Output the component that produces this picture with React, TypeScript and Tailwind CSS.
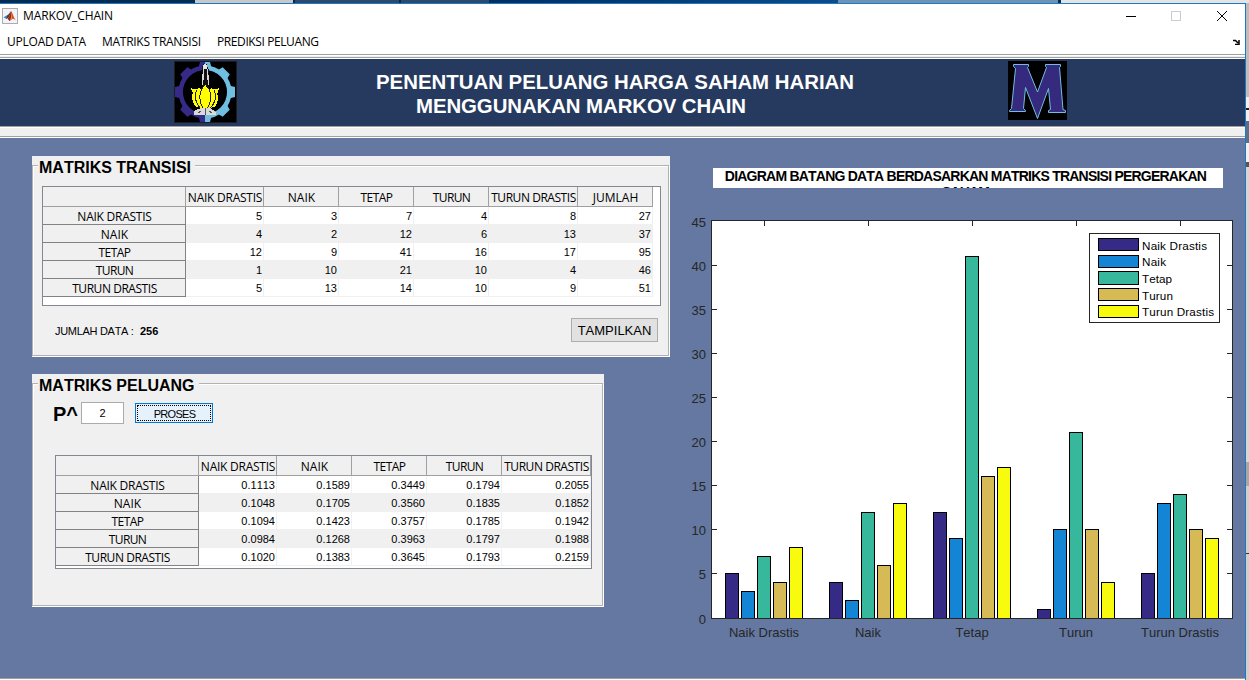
import React from "react";

const SEGOE = "font-['Open_Sans','Noto_Sans',sans-serif]";

const COLORS = ["#352a86", "#1484d4", "#37b89d", "#d6ba55", "#f9fb0e"];

type Label = { text: string; tracking: string };

const ND: Label = { text: "NAIK DRASTIS", tracking: "tracking-[-0.25px]" };
const N: Label = { text: "NAIK", tracking: "tracking-[0px]" };
const TE: Label = { text: "TETAP", tracking: "tracking-[-0.5px]" };
const TU: Label = { text: "TURUN", tracking: "tracking-[-0.6px]" };
const TD: Label = { text: "TURUN DRASTIS", tracking: "tracking-[-0.45px]" };
const JU: Label = { text: "JUMLAH", tracking: "tracking-[0px]" };

const ROWS = [ND, N, TE, TU, TD];

const TRANSITIONS = [
  [5, 3, 7, 4, 8],
  [4, 2, 12, 6, 13],
  [12, 9, 41, 16, 17],
  [1, 10, 21, 10, 4],
  [5, 13, 14, 10, 9],
];

const PROBABILITIES = [
  ["0.1113", "0.1589", "0.3449", "0.1794", "0.2055"],
  ["0.1048", "0.1705", "0.3560", "0.1835", "0.1852"],
  ["0.1094", "0.1423", "0.3757", "0.1785", "0.1942"],
  ["0.0984", "0.1268", "0.3963", "0.1797", "0.1988"],
  ["0.1020", "0.1383", "0.3645", "0.1793", "0.2159"],
];

const TOTALS = [27, 37, 95, 46, 51];

function MatrixTable({
  columns,
  rows,
  grid,
  size,
}: {
  columns: Label[];
  rows: (string | number)[][];
  grid: string;
  size: string;
}) {
  return (
    <div className={`box-border overflow-hidden border border-[#828790] bg-white ${size}`}>
      <div className={`grid h-5 w-max ${grid}`}>
        <div className="border-r border-b border-[#a0a0a0] bg-[#f0f0f0]" />
        {columns.map((c) => (
          <div
            key={c.text}
            className={`flex items-center justify-center overflow-hidden border-r border-b border-[#a0a0a0] bg-[#f0f0f0] pt-[2px] pl-px text-[12px] leading-[17px] whitespace-nowrap ${SEGOE} ${c.tracking}`}
          >
            {c.text}
          </div>
        ))}
      </div>
      {rows.map((row, i) => (
        <div key={i} className={`grid h-[18px] w-max ${grid}`}>
          <div
            className={`flex items-center justify-center border-r border-b border-[#828282] bg-[#f0f0f0] pt-[2px] pl-px text-[12px] leading-[15px] whitespace-nowrap ${SEGOE} ${ROWS[i].tracking}`}
          >
            {ROWS[i].text}
          </div>
          {row.map((value, j) => (
            <div
              key={j}
              className={`border-r border-b border-[#f0f0f0] pt-px pr-px text-right text-[11px] leading-4 ${
                i % 2 ? "bg-[#f0f0f0]" : "bg-white"
              }`}
            >
              {value}
            </div>
          ))}
        </div>
      ))}
    </div>
  );
}

function Panel({ title, size, children }: { title: string; size: string; children: React.ReactNode }) {
  return (
    <section className={`flex flex-col bg-[#f0f0f0] pt-[9px] pr-px pb-px ${size}`}>
      <div className="flex-1 border border-[#b2b2b2] shadow-[1px_1px_0_#fff,inset_1px_1px_0_#fff]">
        <h2 className="-mt-[9px] ml-[5px] w-max bg-[#f0f0f0] pr-[4px] pl-px text-[16px] leading-[22px] font-bold">
          {title}
        </h2>
        {children}
      </div>
    </section>
  );
}

const AXIS = { left: 711.5, top: 220.5 };
const yOf = (v: number) => Math.floor(618 - 8.824 * v) + 0.5;

function BarChart() {
  const ticks = [5, 10, 15, 20, 25, 30, 35, 40];
  const names = ["Naik Drastis", "Naik", "Tetap", "Turun", "Turun Drastis"];
  const legendTop = [238.5, 255.5, 271.5, 288.5, 305.5];
  const legendHeight = [12, 12, 13, 12, 12];
  const legendBase = [250, 266, 283, 300, 316];
  return (
    <svg
      className="block h-[460px] w-[560px] text-[13px]"
      viewBox="685 188 560 460"
      fontFamily="'Liberation Sans', Arial, sans-serif"
    >
      <rect x={711} y={220} width={522} height={399} fill="#fff" />
      {TRANSITIONS.map((row, g) =>
        row.map((v, s) => (
          <rect
            key={`${g}-${s}`}
            x={725.5 + g * 104 + s * 16}
            y={yOf(v)}
            width={13}
            height={618.5 - yOf(v)}
            fill={COLORS[s]}
            stroke="#000"
          />
        )),
      )}
      <g stroke="#262626" fill="none">
        <rect x={AXIS.left} y={AXIS.top} width={521} height={398} />
        {ticks.map((t) => (
          <path key={t} d={`M711 ${yOf(t)}h6M1227 ${yOf(t)}h6`} />
        ))}
        {names.map((n, i) => (
          <path key={n} d={`M${764.5 + i * 104} 220v6`} />
        ))}
      </g>
      <g fill="#262626">
        {[0, ...ticks, 45].map((t) => (
          <text key={t} x={706} y={Math.round(yOf(t)) + (t === 45 ? 6 : 5)} textAnchor="end">
            {t}
          </text>
        ))}
        {names.map((n, i) => (
          <text key={n} x={764 + i * 104} y={637} textAnchor="middle">
            {n}
          </text>
        ))}
      </g>
      <rect x={1089.5} y={233.5} width={130} height={89} fill="#fff" stroke="#262626" />
      {names.map((n, i) => (
        <g key={n}>
          <rect x={1098.5} y={legendTop[i]} width={40} height={legendHeight[i]} fill={COLORS[i]} stroke="#000" />
          <text
            x={1142}
            y={legendBase[i]}
            fontSize={11.7}
            textLength={[65, 24, 30, 31, 72][i]}
            lengthAdjust="spacing"
          >
            {n}
          </text>
        </g>
      ))}
    </svg>
  );
}

function MatlabIcon() {
  return (
    <svg className="h-4 w-4" viewBox="0 0 16 16">
      <rect x="0.5" y="0.5" width="15" height="15" fill="#f1f3f6" stroke="#a9adb3" />
      <path d="M1.500 9.200 5.200 7.300 7 9 4.500 11z" fill="#3d83b5" />
      <path d="M5.200 7.300C7 6.600 7.600 4.200 9 3.200L7.500 8.700 4.500 11z" fill="#4b3a4c" />
      <path d="M9 3.200c1.600 1 2.300 5.800 4.800 9L11 10.500 7.600 13 5.500 10.500C7.500 9.500 7.800 5.500 9 3.200z" fill="#d9481c" />
      <path d="M9 3.200c1 3 1 6-1.400 9.800L6 10.700C8.200 9 8.200 6 9 3.200z" fill="#8f2415" />
      <path d="M9.200 4c.8 2 1 4.500.6 7L8 12.500C9.200 9.500 9.400 7 9.200 4z" fill="#f39a3a" />
    </svg>
  );
}

function GearTeeth({ color, angles }: { color: string; angles: number[] }) {
  return (
    <g fill={color}>
      {angles.map((a) => (
        <path key={a} d="M24 9 26 1H36L38 9z" transform={`rotate(${a} 31 31)`} />
      ))}
    </g>
  );
}

function LotusEmblem() {
  return (
    <svg className="block h-[62px] w-[63px]" viewBox="0 0 63 62">
      <defs>
        <clipPath id="gear-left">
          <rect x="0" y="0" width="31" height="62" />
        </clipPath>
        <clipPath id="gear-right">
          <rect x="31" y="0" width="32" height="62" />
        </clipPath>
      </defs>
      <rect width="63" height="62" fill="#000" />
      <rect x="0.500" y="0.500" width="62" height="61" fill="none" stroke="#1c1c22" />
      <g clipPath="url(#gear-left)">
        <GearTeeth color="#352a86" angles={[0, -45, -90, -135, 180]} />
        <circle cx="31" cy="31" r="24" fill="none" stroke="#352a86" strokeWidth="5" />
      </g>
      <g clipPath="url(#gear-right)">
        <GearTeeth color="#70bfe2" angles={[0, 45, 90, 135, 180]} />
        <circle cx="31" cy="31" r="24" fill="none" stroke="#70bfe2" strokeWidth="5" />
      </g>
      <circle cx="31" cy="31" r="22" fill="#000" />
      <g shapeRendering="crispEdges">
        <path d="M29.500 3h3l2 5v17h-7V8z" fill="#111" />
        <path d="M29.500 8 28.500 24.500M33.500 8 34.500 24.500" stroke="#ddd6d6" strokeWidth="1.300" />
        <path d="M30 3h2l1.500 3-1 2h-3l-1-2z" fill="#e8e4e4" />
        <path
          d="M22 46 20 44 17.500 36 19 32 16.500 27 22 28.500 25 27 27.500 29 31 23.500 35 29 37.500 27 40 28.500 45.500 27 43 33 44.500 37 42 45 38 46.500 31 48.500 25 46.500z"
          fill="#ffff00"
        />
        <path
          d="M30.500 24C25.500 29 24 39 29 47M32 24C37.500 29 38.500 39 33.500 47M22.500 29.500C20 35 21.500 42 26 47M40.500 29.500C42.500 35 41.500 42 36.500 47"
          fill="none"
          stroke="#222"
        />
        <path d="M20 50 27 47h9l6 4v3H20z" fill="#d9d9d9" />
        <path d="M31 47v7M27 50l-3 2M35 50l3 2" stroke="#555" />
      </g>
    </svg>
  );
}

function MonogramEmblem() {
  return (
    <svg className="block h-[59px] w-[59px]" viewBox="0 0 59 59">
      <rect width="59" height="59" fill="#000" />
      <path
        d="M5.500 3.500H20.500V5.500L19.500 6.500 29.500 31 38.500 6.500 37.500 5.500V3.500H52.500V5.500L51.500 6.500 55 48.500 57.500 49.500V51.500H40.500V49.500L42.500 48.500 40.500 27.500 29.500 57.500 17.500 26.500 15.500 47.500 17.500 49.500V50.500H1.500V49.500L3.500 47.500 7.500 7.500 5.500 5.500z"
        fill="#352a7e"
        stroke="#70bfe2"
      />
    </svg>
  );
}

function TopStrip() {
  return (
    <div className="flex h-[3px] bg-[#042c50]">
      <div className="w-[195px]" />
      <div className="w-[98px] bg-[#c8c8c8]" />
      <div className="w-[2px]" />
      <div className="w-[104px] bg-[#2c4b6c]" />
      <div className="w-[2px]" />
      <div className="w-[88px] bg-[#2c4b6c]" />
      <div className="flex-1 bg-linear-to-r from-[#032f60] to-[#0e4c8a]" />
      <div className="w-[220px] bg-[#6f93b5]" />
      <div className="w-[3px]" />
      <div className="w-[188px] bg-[#e4e4e4]" />
    </div>
  );
}

function Separator() {
  return <div className="h-[2px] border-t border-[#a0a0a0] bg-white" />;
}

export default function App() {
  return (
    <div className="flex h-[680px] w-[1249px] flex-col overflow-hidden bg-white font-['Liberation_Sans',Arial,sans-serif] text-black [font-kerning:none]">
      <TopStrip />
      <div className="flex min-h-0 flex-1">
        <div className="flex w-[1246px] flex-col border-t border-r border-[#1e78c8]">
          <header className={`flex h-6 items-center pl-[2px] ${SEGOE}`}>
            <MatlabIcon />
            <span className="ml-[5px] flex-1 text-[12px] tracking-[-0.1px]">MARKOV_CHAIN</span>
            <svg className="h-6 w-[120px]" viewBox="0 0 120 24" fill="none" shapeRendering="crispEdges">
              <path d="M1 12.500h10" stroke="#000" />
              <rect x="46.500" y="7.500" width="9" height="9" stroke="#ccc" />
              <path d="M92 7l10 10M102 7l-10 10" stroke="#000" shapeRendering="auto" />
            </svg>
          </header>
          <nav className={`flex h-[26px] items-center pt-[2px] pr-[5px] pl-[7px] text-[12px] ${SEGOE}`}>
            <span className="w-[95px] tracking-[-0.23px]">UPLOAD DATA</span>
            <span className="w-[115px] tracking-[-0.28px]">MATRIKS TRANSISI</span>
            <span className="flex-1 tracking-[-0.4px]">PREDIKSI PELUANG</span>
            <svg className="-mt-px h-[6px] w-[7px]" viewBox="0 0 7 6">
              <path d="M0 1.500h2.500L5 4M6 1v4.500H2" fill="none" stroke="#000" strokeWidth="1.500" />
            </svg>
          </nav>
          <Separator />
          <div className="h-px bg-[#f0f0f0]" />
          <Separator />
          <div className="flex h-[67px] bg-[#263a5f]">
            <div className="pt-[2px] pl-[174px]">
              <LotusEmblem />
            </div>
            <h1 className="w-[771px] pt-[11px] pl-[139px] text-[20.4px] leading-6 font-bold whitespace-nowrap text-white">
              PENENTUAN PELUANG HARGA SAHAM HARIAN
              <span className="block pl-10 tracking-[-0.08px]">MENGGUNAKAN MARKOV CHAIN</span>
            </h1>
            <div className="pt-[2px]">
              <MonogramEmblem />
            </div>
          </div>
          <Separator />
          <div className="h-2 bg-[#f0f0f0]" />
          <Separator />
          <main className="flex h-[540px] bg-[#6478a1]">
            <div className="flex w-[685px] flex-col gap-[17px] pt-[18px] pl-8">
              <Panel title="MATRIKS TRANSISI" size="h-[201px] w-[638px]">
                <div className="pt-[7px] pl-[9px]">
                  <MatrixTable
                    columns={[ND, N, TE, TU, TD, JU]}
                    rows={TRANSITIONS.map((r, i) => [...r, TOTALS[i]])}
                    grid="grid-cols-[143px_78px_75px_75px_75px_89px_75px]"
                    size="h-[120px] w-[619px]"
                  />
                </div>
                <div className="flex justify-between pt-3 pr-[10px] pl-[22px]">
                  <p className="text-[11px] leading-[26px]">
                    <span className="inline-block w-[85px] tracking-[-0.3px]">JUMLAH DATA :</span>
                    <b>256</b>
                  </p>
                  <button className="h-6 w-[87px] border border-[#adadad] bg-[#e1e1e1] pt-px text-[13px]">TAMPILKAN</button>
                </div>
              </Panel>
              <Panel title="MATRIKS PELUANG" size="h-[233px] w-[572px]">
                <div className="flex h-[26px] pt-[5px] pl-5">
                  <span className="w-7 text-[20px] leading-[24px] font-bold">P^</span>
                  <div className="h-[22px] w-[43px] border border-[#ababab] bg-white text-center text-[11px] leading-[21px]">
                    2
                  </div>
                  <button className="mt-px ml-[11px] h-5 w-[78px] border border-[#0078d7] bg-[#e5f1fb] p-px">
                    <span className="flex h-4 items-center justify-center border border-dotted border-black pt-[2px] pl-px text-[11px] tracking-[-0.7px]">
                      PROSES
                    </span>
                  </button>
                </div>
                <div className="pt-[32px] pl-[22px]">
                  <MatrixTable
                    columns={[ND, N, TE, TU, TD]}
                    rows={PROBABILITIES}
                    grid="grid-cols-[143px_78px_75px_75px_75px_89px]"
                    size="h-[114px] w-[537px]"
                  />
                </div>
              </Panel>
            </div>
            <div className="w-[560px] pt-[30px]">
              <h3 className="ml-7 h-5 w-[510px] overflow-hidden bg-white pr-[5px] text-center text-[14px] leading-4 font-bold tracking-[-0.78px]">
                DIAGRAM BATANG DATA BERDASARKAN MATRIKS TRANSISI PERGERAKAN SAHAM
              </h3>
              <BarChart />
            </div>
          </main>
          <Separator />
        </div>
        <div className="flex flex-1 flex-col bg-[#cfcfcf]">
          <div className="h-[94px] bg-[#bdbdbd]" />
          <div className="h-[11px] bg-[#f0f0f0]" />
          <div className="h-[2px] bg-[#222]" />
          <div className="h-[11px] bg-[#f0f0f0]" />
          <div className="h-[22px] bg-[#57708c]" />
          <div className="h-[19px] bg-[#f0f0f0]" />
          <div className="h-[5px] bg-[#555]" />
          <div className="h-[295px] bg-[#d6d6d6]" />
          <div className="h-[24px] bg-[#a8a8a8]" />
          <div className="h-[67px] bg-[#cfcfcf]" />
          <div className="h-px bg-[#333]" />
        </div>
      </div>
    </div>
  );
}
